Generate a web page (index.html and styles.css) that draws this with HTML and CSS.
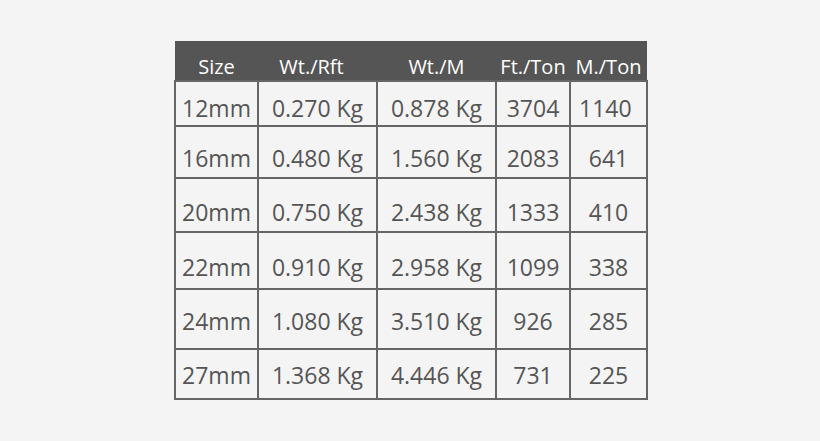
FILE: index.html
```html
<!DOCTYPE html>
<html>
<head>
<meta charset="utf-8">
<link rel="stylesheet" href="styles.css">
</head>
<body>
<div class="wrap">
<table class="spec">
<colgroup>
<col class="c1"><col class="c2"><col class="c3"><col class="c4"><col class="c5">
</colgroup>
<thead>
<tr><th>Size</th><th class="h2">Wt./Rft</th><th>Wt./M</th><th>Ft./Ton</th><th>M./Ton</th></tr>
</thead>
<tbody>
<tr class="r1"><td>12mm</td><td>0.270 Kg</td><td>0.878 Kg</td><td>3704</td><td class="l">1140</td></tr>
<tr class="r2"><td>16mm</td><td>0.480 Kg</td><td>1.560 Kg</td><td>2083</td><td>641</td></tr>
<tr class="r3"><td>20mm</td><td>0.750 Kg</td><td>2.438 Kg</td><td>1333</td><td>410</td></tr>
<tr class="r4"><td>22mm</td><td>0.910 Kg</td><td>2.958 Kg</td><td>1099</td><td>338</td></tr>
<tr class="r5"><td>24mm</td><td>1.080 Kg</td><td>3.510 Kg</td><td>926</td><td>285</td></tr>
<tr class="r6"><td>27mm</td><td>1.368 Kg</td><td>4.446 Kg</td><td>731</td><td>225</td></tr>
</tbody>
</table>
</div>
</body>
</html>
```
FILE: styles.css
```css
html, body {
  margin: 0;
  padding: 0;
  background: #f4f4f4;
}
.wrap {
  padding: 41px 0 0 174px;
}
.spec {
  border-collapse: collapse;
  table-layout: fixed;
  width: 472px;
  font-family: "Open Sans", "Noto Sans", sans-serif;
  color: #555555;
}
.c1 { width: 83px; }
.c2 { width: 119px; }
.c3 { width: 119px; }
.c4 { width: 74px; }
.c5 { width: 77px; }
.spec th {
  background: #555555;
  color: #ffffff;
  font-weight: normal;
  font-size: 20px;
  height: 40px;
  padding: 12px 0 0 0;
  box-sizing: border-box;
  text-align: center;
  vertical-align: middle;
  line-height: 1;
  white-space: nowrap;
}
.spec th.h2 { padding-right: 12px; }
.spec td {
  border: 2px solid #666666;
  font-size: 23px;
  text-align: center;
  padding: 9px 0 0 0;
  line-height: 1;
  white-space: nowrap;
  box-sizing: border-box;
  vertical-align: middle;
}
.spec td.l { text-align: left; padding-left: 8px; }
.r1 td { height: 45px; padding-top: 9px; }
.r2 td { height: 52px; padding-top: 12px; }
.r3 td { height: 54px; padding-top: 14px; }
.r4 td { height: 57px; padding-top: 13px; }
.r5 td { height: 60px; padding-top: 4px; }
.r6 td { height: 50px; padding-top: 2px; }
```
